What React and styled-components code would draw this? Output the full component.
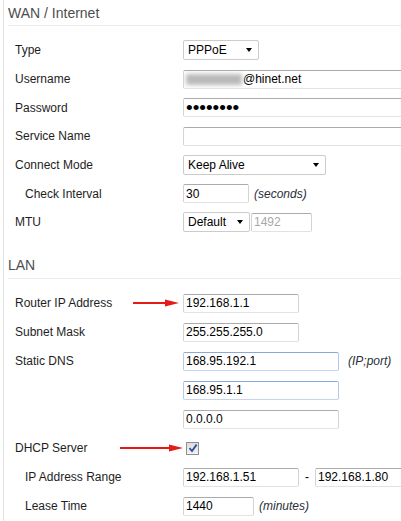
import React from 'react';
import styled, { createGlobalStyle } from 'styled-components';

const GlobalStyle = createGlobalStyle`
	html, body {
		margin: 0;
		padding: 0;
		background: #fff;
		overflow: hidden;
	}
	body {
		font-family: "Liberation Sans", Arial, sans-serif;
		font-size: 12px;
		color: #222;
	}
`;

const Page = styled.div`
	width: 640px;
	min-height: 521px;
	margin-left: 3px;
	border-left: 1px solid #e4e4e4;
`;

const SectionTitle = styled.div`
	margin: ${p => p.$first ? '0' : '16px'} 0 0 4px;
	height: 25px;
	display: flex;
	align-items: center;
	font-size: 14px;
	color: #4d4d4d;
	border-bottom: 1px solid #ececec;
	box-sizing: content-box;
`;

const Form = styled.div`
	padding-top: 10px;
`;

const Row = styled.div`
	display: grid;
	grid-template-columns: 168px 1fr;
	align-items: center;
	height: ${p => p.$h}px;
	padding-left: 11px;
`;

const Label = styled.div`
	position: relative;
	padding-left: ${p => p.$indent ? 10 : 0}px;
	font-size: 12px;
	color: #1e1e1e;
	white-space: nowrap;
`;

const Controls = styled.div`
	display: flex;
	align-items: center;
	white-space: nowrap;
`;

const TextBox = styled.div`
	box-sizing: border-box;
	width: ${p => p.$w}px;
	height: 19px;
	padding: 0 2px;
	display: flex;
	align-items: center;
	border: 1px solid ${p => p.$blue ? '#b3cbe8' : '#d3d3d3'};
	border-top-color: ${p => p.$blue ? '#8aaad6' : '#ababab'};
	border-bottom-color: ${p => p.$blue ? '#c2d6ee' : '#e2e2e2'};
	border-radius: 2px;
	background: #fff;
	font-size: 12px;
	color: ${p => p.$disabled ? '#a8a8a8' : '#000'};
	overflow: hidden;
`;

const Select = styled.div`
	box-sizing: border-box;
	width: ${p => p.$w}px;
	height: 20px;
	padding: 0 6px 0 4px;
	display: flex;
	align-items: center;
	justify-content: space-between;
	border: 1px solid #cbcbcb;
	border-radius: 2px;
	background: #fff;
	font-size: 12px;
	color: #000;
`;

const Caret = styled.span`
	width: 0;
	height: 0;
	border-left: 3px solid transparent;
	border-right: 3px solid transparent;
	border-top: 4px solid #000;
`;

const Hint = styled.span`
	margin-left: 5px;
	font-style: italic;
	font-size: 12px;
	color: #2a2f3a;
`;

const Dash = styled.span`
	margin: 0 6px 0 6px;
	font-size: 12px;
	color: #000;
`;

/* redacted part of the user name: a blurred grey smear */
const Redacted = styled.span`
	display: inline-block;
	width: 56px;
	height: 11px;
	margin-right: 1px;
	background: #b9b9b9;
	filter: blur(2px);
`;

const Dots = styled.span`
	font-size: 19px;
	line-height: 1;
	color: #000;
	letter-spacing: 0;
`;

const Check = styled.div`
	box-sizing: border-box;
	width: 13px;
	height: 13px;
	margin-left: 3px;
	border: 1px solid #8e8f8f;
	background: linear-gradient(#dcdcdc, #f4f4f4);
	display: flex;
	align-items: center;
	justify-content: center;
`;

const Arrow = styled.svg`
	position: absolute;
	top: 50%;
	left: ${p => p.$left}px;
	transform: translateY(-50%);
`;

const RedArrow = ({ left, width }) => (
	<Arrow $left={left} width={width} height="9" viewBox={`0 0 ${width} 9`}>
		<line x1="0" y1="4.5" x2={width - 12} y2="4.5" stroke="#e41b17" strokeWidth="2" />
		<polygon points={`${width - 14},1 ${width},4.5 ${width - 14},8`} fill="#e41b17" />
	</Arrow>
);

const Field = ({ label, indent, h = 29, children, arrow }) => (
	<Row $h={h}>
		<Label $indent={indent}>
			{label}
			{arrow && <RedArrow left={arrow[0]} width={arrow[1]} />}
		</Label>
		<Controls>{children}</Controls>
	</Row>
);

const Dropdown = ({ w, value }) => (
	<Select $w={w}>
		<span>{value}</span>
		<Caret />
	</Select>
);

const App = () => {
	const wh = 28.7;
	return (
		<Page>
			<GlobalStyle />
			<SectionTitle $first>WAN / Internet</SectionTitle>
			<Form>
				<Field label="Type" h={wh}>
					<Dropdown w={76} value="PPPoE" />
				</Field>
				<Field label="Username" h={wh}>
					<TextBox $w={260}>
						<Redacted />@hinet.net
					</TextBox>
				</Field>
				<Field label="Password" h={wh}>
					<TextBox $w={260}>
						<Dots>••••••••</Dots>
					</TextBox>
				</Field>
				<Field label="Service Name" h={wh}>
					<TextBox $w={260} />
				</Field>
				<Field label="Connect Mode" h={wh}>
					<Dropdown w={143} value="Keep Alive" />
				</Field>
				<Field label="Check Interval" indent h={wh}>
					<TextBox $w={66}>30</TextBox>
					<Hint>(seconds)</Hint>
				</Field>
				<Field label="MTU" h={wh}>
					<Dropdown w={67} value="Default" />
					<TextBox $w={61} $disabled style={{ marginLeft: 1 }}>1492</TextBox>
				</Field>
			</Form>

			<SectionTitle>LAN</SectionTitle>
			<Form>
				<Field label="Router IP Address" arrow={[118, 46]}>
					<TextBox $w={116}>192.168.1.1</TextBox>
				</Field>
				<Field label="Subnet Mask">
					<TextBox $w={116}>255.255.255.0</TextBox>
				</Field>
				<Field label="Static DNS">
					<TextBox $w={156} $blue>168.95.192.1</TextBox>
					<Hint style={{ marginLeft: 9 }}>(IP;port)</Hint>
				</Field>
				<Field label="">
					<TextBox $w={156} $blue>168.95.1.1</TextBox>
				</Field>
				<Field label="">
					<TextBox $w={156}>0.0.0.0</TextBox>
				</Field>
				<Field label="DHCP Server" arrow={[105, 63]}>
					<Check>
						<svg width="10" height="10" viewBox="0 0 10 10">
							<path d="M1.5 5.2 L4 8 L8.6 1.6" fill="none" stroke="#2f4f9e" strokeWidth="1.8" />
						</svg>
					</Check>
				</Field>
				<Field label="IP Address Range" indent>
					<TextBox $w={116}>192.168.1.51</TextBox>
					<Dash>-</Dash>
					<TextBox $w={120}>192.168.1.80</TextBox>
				</Field>
				<Field label="Lease Time" indent>
					<TextBox $w={71}>1440</TextBox>
					<Hint>(minutes)</Hint>
				</Field>
			</Form>
		</Page>
	);
};

export default App;
